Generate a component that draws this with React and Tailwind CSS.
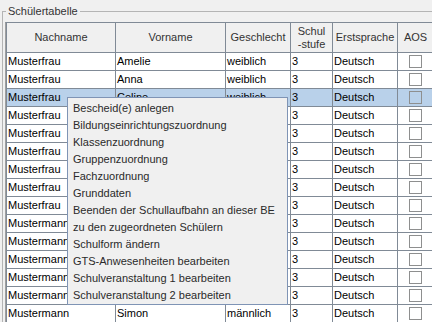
import React from "react";

// Vorname/Geschlecht der Zeilen 4–14 liegen unter dem Kontextmenü
const rows = [
  ["Musterfrau", "Amelie", "weiblich"],
  ["Musterfrau", "Anna", "weiblich"],
  ["Musterfrau", "Celine", "weiblich"],
  ["Musterfrau", "", ""],
  ["Musterfrau", "", ""],
  ["Musterfrau", "", ""],
  ["Musterfrau", "", ""],
  ["Musterfrau", "", ""],
  ["Musterfrau", "", ""],
  ["Mustermann", "", ""],
  ["Mustermann", "", ""],
  ["Mustermann", "", ""],
  ["Mustermann", "", ""],
  ["Mustermann", "", ""],
  ["Mustermann", "Simon", "männlich"],
];

const menuItems = [
  "Bescheid(e) anlegen",
  "Bildungseinrichtungszuordnung",
  "Klassenzuordnung",
  "Gruppenzuordnung",
  "Fachzuordnung",
  "Grunddaten",
  "Beenden der Schullaufbahn an dieser BE",
  "zu den zugeordneten Schülern",
  "Schulform ändern",
  "GTS-Anwesenheiten bearbeiten",
  "Schulveranstaltung 1 bearbeiten",
  "Schulveranstaltung 2 bearbeiten",
];

// Spaltenbreiten inkl. rechter Gitterlinie
const cols = ["w-[109px]", "w-[110px]", "w-[65px]", "w-[42px]", "w-[65px]", "w-[36px]"];

const HeaderCell = ({ w, children }) => (
  <div className={`${w} shrink-0 h-full border-r border-[#808a96] flex items-center justify-center text-center leading-[13px] text-[#333]`}>
    {children}
  </div>
);

const Row = ({ r, selected }) => (
  <div className={`flex h-[18px] border-b border-[#808a96] ${selected ? "bg-[#b9d1ea]" : "bg-white"}`}>
    <div className={`${cols[0]} shrink-0 border-r border-[#808a96] pl-[1px] leading-[17px] text-black`}>{r[0]}</div>
    <div className={`${cols[1]} shrink-0 border-r border-[#808a96] pl-[1px] leading-[17px] text-black`}>{r[1]}</div>
    <div className={`${cols[2]} shrink-0 border-r border-[#808a96] pl-[1px] leading-[17px] text-black`}>{r[2]}</div>
    <div className={`${cols[3]} shrink-0 border-r border-[#808a96] pl-[1px] leading-[17px] text-black`}>3</div>
    <div className={`${cols[4]} shrink-0 border-r border-[#808a96] pl-[1px] leading-[17px] text-black`}>Deutsch</div>
    <div className={`${cols[5]} shrink-0 border-r border-[#808a96] flex items-center justify-center`}>
      <div className="w-[13px] h-[13px] border border-[#8e8f8f]" />
    </div>
  </div>
);

export default function App() {
  return (
    <div className="relative w-[432px] h-[322px] overflow-hidden bg-[#f0f0f0] font-['Liberation_Sans',Arial,sans-serif] text-[11px]">
      <fieldset className="ml-[2px] mt-[5px] min-w-0 w-[460px] h-[330px] border border-[#b4b4b4] pl-[2px] pt-[4px]">
        <legend className="ml-[1px] px-[2px] leading-[13px] text-[#333]">Schülertabelle</legend>

        {/* Scrollbereich mit Tabelle */}
        <div className="border-l border-[#a0a0a0] border-t border-t-[#808a96]">
          <div className="border-l border-[#808a96]">
            <div className="flex h-[30px] border-b border-[#808a96] bg-[#f0f0f0]">
              <HeaderCell w={cols[0]}>Nachname</HeaderCell>
              <HeaderCell w={cols[1]}>Vorname</HeaderCell>
              <HeaderCell w={cols[2]}>Geschlecht</HeaderCell>
              <HeaderCell w={cols[3]}>
                Schul
                <br />
                -stufe
              </HeaderCell>
              <HeaderCell w={cols[4]}>Erstsprache</HeaderCell>
              <HeaderCell w={cols[5]}>AOS</HeaderCell>
            </div>
            {rows.map((r, i) => (
              <Row key={i} r={r} selected={i === 2} />
            ))}
          </div>
        </div>
      </fieldset>

      {/* Kontextmenü */}
      <div className="absolute left-[67px] top-[97px] w-[221px] border border-[#7f94b5] bg-[#f0f0f0] pt-[2px]">
        {menuItems.map((m) => (
          <div key={m} className="h-[17px] leading-[17px] pl-[5px] text-[#2a2a2a] whitespace-nowrap">
            {m}
          </div>
        ))}
      </div>
    </div>
  );
}
